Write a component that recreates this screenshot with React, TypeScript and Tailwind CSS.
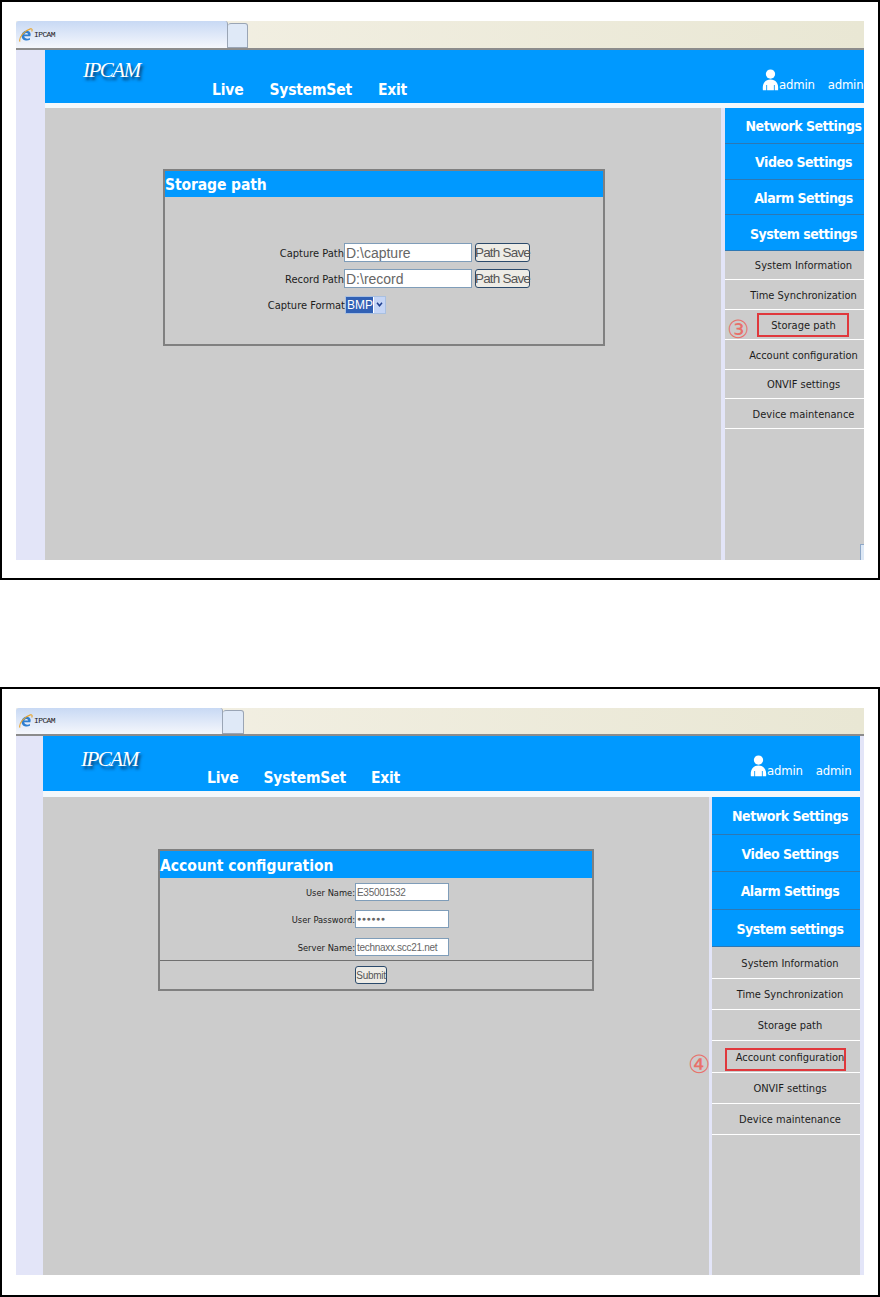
import React from 'react';

const sideFont = "font-['DejaVu_Sans_Condensed','DejaVu_Sans',sans-serif] font-stretch-condensed";

const IeIcon = ({ className }: { className: string }) => (
    <svg viewBox="0 0 16 16" className={className}>
        <path d="M13 9.500 H6 C6 12 10 13 12.500 11.500 L12.500 13.500 C8 15.500 3 13.500 3 9 C3 5 7 2.500 10.500 3.500 C13 4.300 14 7 13 9.500 Z M6 7.500 H10.500 C10.500 5 6.500 5 6 7.500 Z" fill="#2f7fd0" fillRule="evenodd" />
        <path d="M1 15.500 C-0.500 11 6 3 13 1 C15 0.500 15.500 2 14.500 4" fill="none" stroke="#e8a632" strokeWidth="1.300" />
    </svg>
);

const UserIcon = () => (
    <svg viewBox="0 0 20 26" className="w-[17px] h-[22px] shrink-0">
        <circle cx="10" cy="6" r="5.500" fill="#fff" />
        <path d="M1 25 C0 17 4 12.500 10 12.500 C16 12.500 20 17 19 25 H15 V19 H14 V25 H6 V19 H5 V25 Z" fill="#fff" />
    </svg>
);

const TabBar = ({ h, tab, newTab }: { h: string; tab: string; newTab: string }) => (
    <div className={`flex ${h} bg-gradient-to-r from-[#f4f1e6] to-[#e9e7d4] border-b-2 border-[#8c8c8c]`}>
        <div className={`${tab} flex items-center gap-[1px] pl-[3px] rounded-t-[3px] bg-gradient-to-b from-[#c8d9f4] to-[#f5f7fc] border-r border-[#9aa5b5]`}>
            <IeIcon className="w-[14px] h-[14px]" />
            <span className="font-['Liberation_Mono',monospace] text-[8px] tracking-[-0.6px] text-[#222]">IPCAM</span>
        </div>
        <div className={`${newTab} mt-[2px] rounded-t-[3px] bg-[#dfe9f7] border border-[#9aa5b5] border-l-0`} />
    </div>
);

const Header = ({ box, logo, navGap, user }: { box: string; logo: string; navGap: string; user: string }) => (
    <div className={`${box} flex bg-[#0099ff] text-white shrink-0 overflow-hidden`}>
        <div className={`${logo} shrink-0`}>
            <span className="font-['Liberation_Serif',serif] italic text-[21px] tracking-[-1.500px] [text-shadow:2px_3px_3px_#0b3f6e]">IPCAM</span>
        </div>
        <div className={`${navGap} flex items-end ${sideFont} font-bold text-[15.500px] tracking-[-0.2px] leading-[20px]`}>
            <span>Live</span>
            <span>SystemSet</span>
            <span>Exit</span>
        </div>
        <div className={`${user} flex items-end ${sideFont} text-[13px] tracking-[-0.2px] leading-[18px] whitespace-nowrap`}>
            <UserIcon />
            <span className="-mb-[3px]">admin</span>
            <span className="-mb-[3px] ml-[13px]">admin</span>
        </div>
    </div>
);

const BLUE = ['Network Settings', 'Video Settings', 'Alarm Settings', 'System settings'];
const GRAY = ['System Information', 'Time Synchronization', 'Storage path', 'Account configuration', 'ONVIF settings', 'Device maintenance'];

const Sidebar = ({ width, blueH, grayHs, pad, marks, children }: {
    width: string; blueH: string; grayHs: string[]; pad: string;
    marks: Record<string, { box: string; circle: string; glyph: string }>;
    children?: React.ReactNode;
}) => (
    <div className={`${width} relative shrink-0 bg-[#cccccc] ${sideFont}`}>
        {BLUE.map((label) => (
            <div key={label} className={`${blueH} ${pad} pt-[3px] flex items-center justify-center bg-[#0099ff] border-b border-[#2d78b4] last:border-b-0 font-bold text-[14px] tracking-[-0.5px] text-white whitespace-nowrap`}>
                {label}
            </div>
        ))}
        {GRAY.map((label, i) => (
            <div key={label} className={`${grayHs[i]} ${pad} pt-[3px] relative flex items-center justify-center border-b border-white text-[11px] text-[#1c1c1c] whitespace-nowrap`}>
                {label}
                {marks[label] && <div className={`absolute border-2 border-[#e0383c] ${marks[label].box}`} />}
                {marks[label] && (
                    <span className={`absolute font-['DejaVu_Serif',serif] font-normal text-[#e8706a] text-[25px] leading-none ${marks[label].circle}`}>
                        {marks[label].glyph}
                    </span>
                )}
            </div>
        ))}
        {children}
    </div>
);

const inputCls = "bg-white border border-[#7f9db9] font-['Liberation_Sans',sans-serif] text-[#666] flex items-center px-[1px] pt-[1px] whitespace-nowrap overflow-hidden";
const btnCls = "bg-[#eeece6] border border-[#2b4a6b] rounded-[3px] font-['Liberation_Sans',sans-serif] text-[#555] flex items-center justify-center whitespace-nowrap";

const StorageForm = () => (
    <div className="w-[442px] h-[177px] mt-[61px] ml-[118px] border-2 border-[#808080]">
        <div className={`h-[26px] bg-[#0099ff] text-white font-bold text-[15.500px] tracking-[-0.1px] leading-[29px] ${sideFont}`}>Storage path</div>
        <div className={`flex flex-col gap-[7px] pt-[46px] text-[11px] text-[#1c1c1c] ${sideFont}`}>
            {[['Capture Path', 'D:\\capture'], ['Record Path', 'D:\\record']].map(([label, value]) => (
                <div key={label} className="flex items-center h-[19px]">
                    <span className="w-[179px] pt-[3px] text-right">{label}</span>
                    <div className={`${inputCls} w-[128px] h-[19px] text-[14px]`}>{value}</div>
                    <div className={`${btnCls} w-[55px] h-[19px] ml-[3px] pt-[1px] text-[13.500px] tracking-[-0.800px]`}>Path Save</div>
                </div>
            ))}
            <div className="flex items-center h-[19px]">
                <span className="w-[180px] pt-[3px] text-right">Capture Format</span>
                <div className="flex w-[41px] h-[18px] bg-white border border-[#a9c0e0]">
                    <span className="w-[27px] bg-[#3161b5] text-white font-['Liberation_Sans',sans-serif] text-[12px] leading-[16px] pl-[1px]">BMP</span>
                    <span className="flex-1 ml-[1px] bg-[#c5d5f5] flex items-center justify-center">
                        <svg viewBox="0 0 8 6" className="w-[7px] h-[5px]"><path d="M1 1 L4 4.500 L7 1" fill="none" stroke="#1f3f8f" strokeWidth="1.800" /></svg>
                    </span>
                </div>
            </div>
        </div>
    </div>
);

const AccountForm = () => (
    <div className="w-[436px] h-[142px] mt-[52px] ml-[115px] border-2 border-[#808080]">
        <div className={`h-[27px] bg-[#0099ff] text-white font-bold text-[15.500px] leading-[30px] ${sideFont}`}>Account configuration</div>
        <div className={`flex flex-col pt-[5px] h-[83px] border-b border-[#707070] text-[9.250px] text-[#1c1c1c] ${sideFont}`}>
            {[['User Name:', 'E35001532', 'mb-[9px]'], ['User Password:', '●●●●●●', 'mb-[10px]'], ['Server Name:', 'technaxx.scc21.net', '']].map(([label, value, gap]) => (
                <div key={label} className={`flex items-center h-[18px] ${gap}`}>
                    <span className="w-[195px] pt-[2px] text-right">{label}</span>
                    <div className={`${inputCls} w-[94px] h-[18px] ${value.startsWith('●') ? 'text-[7px] tracking-[0.5px]' : 'text-[10px] tracking-[-0.3px]'}`}>{value}</div>
                </div>
            ))}
        </div>
        <div className="pt-[5px] pl-[195px]">
            <div className={`${btnCls} w-[32px] h-[18px] pt-[1px] text-[10px] tracking-[-0.3px]`}>Submit</div>
        </div>
    </div>
);

const App = () => {
    return (
        <div className="w-[880px] h-[1297px] bg-white flex flex-col overflow-hidden">
            {/* Primera captura */}
            <div className="h-[580px] border-2 border-black pt-[19px] pl-[14px] pr-[14px]">
                <div className="w-[848px] h-[539px] flex flex-col">
                    <TabBar h="h-[29px]" tab="w-[212px]" newTab="w-[20px]" />
                    <div className="flex flex-1 bg-[#e3e5f8]">
                        <div className="w-[29px] shrink-0" />
                        <div className="flex-1 min-w-0 flex flex-col">
                            <Header box="h-[53px] pt-[7px] pb-[3px]" logo="w-[167px] pl-[38px] leading-[26px]" navGap="gap-[26px]" user="ml-[355px] mb-[9px]" />
                            <div className="h-[5px] bg-[#f4f8fb]" />
                            <div className="flex flex-1 min-h-0">
                                <div className="w-[676px] bg-[#cccccc] overflow-hidden"><StorageForm /></div>
                                <div className="w-[4px]" />
                                <Sidebar
                                    width="w-[139px]"
                                    blueH="h-[35.750px]"
                                    pad="pl-[18px]"
                                    grayHs={['h-[29px]', 'h-[30px]', 'h-[30px]', 'h-[30px]', 'h-[29px]', 'h-[30px]']}
                                    marks={{ 'Storage path': { box: 'left-[32px] right-[15px] top-[3px] h-[24px]', circle: 'left-[2px] top-[7px]', glyph: '③' } }}
                                >
                                    <div className="absolute right-0 bottom-0 w-[4px] h-[16px] bg-[#dde8f5] border-l border-t border-[#8fa8c8]" />
                                </Sidebar>
                            </div>
                        </div>
                    </div>
                </div>
            </div>

            <div className="h-[107px] shrink-0" />

            {/* Segunda captura */}
            <div className="h-[610px] border-2 border-black pt-[19px] pl-[14px] pr-[14px]">
                <div className="w-[848px] h-[567px] flex flex-col">
                    <TabBar h="h-[28px]" tab="w-[207px]" newTab="w-[21px]" />
                    <div className="flex flex-1 bg-[#e3e5f8]">
                        <div className="w-[27px] shrink-0" />
                        <div className="w-[817px] flex flex-col">
                            <Header box="h-[55px] pt-[10px] pb-[3px]" logo="w-[164px] pl-[38px] leading-[26px]" navGap="gap-[25px]" user="ml-[350px] mb-[11px]" />
                            <div className="h-[6px] bg-[#f4f8fb]" />
                            <div className="flex flex-1 min-h-0">
                                <div className="w-[666px] bg-[#cccccc] overflow-hidden"><AccountForm /></div>
                                <div className="w-[3px]" />
                                <Sidebar
                                    width="w-[148px]"
                                    blueH="h-[37.500px]"
                                    pad="pl-[8px]"
                                    grayHs={['h-[32px]', 'h-[31px]', 'h-[31px]', 'h-[32px]', 'h-[31px]', 'h-[31px]']}
                                    marks={{ 'Account configuration': { box: 'left-[13px] right-[14px] top-[7px] h-[23px]', circle: 'left-[-24px] top-[11px]', glyph: '④' } }}
                                />
                            </div>
                        </div>
                    </div>
                </div>
            </div>
        </div>
    );
};

export default App;
